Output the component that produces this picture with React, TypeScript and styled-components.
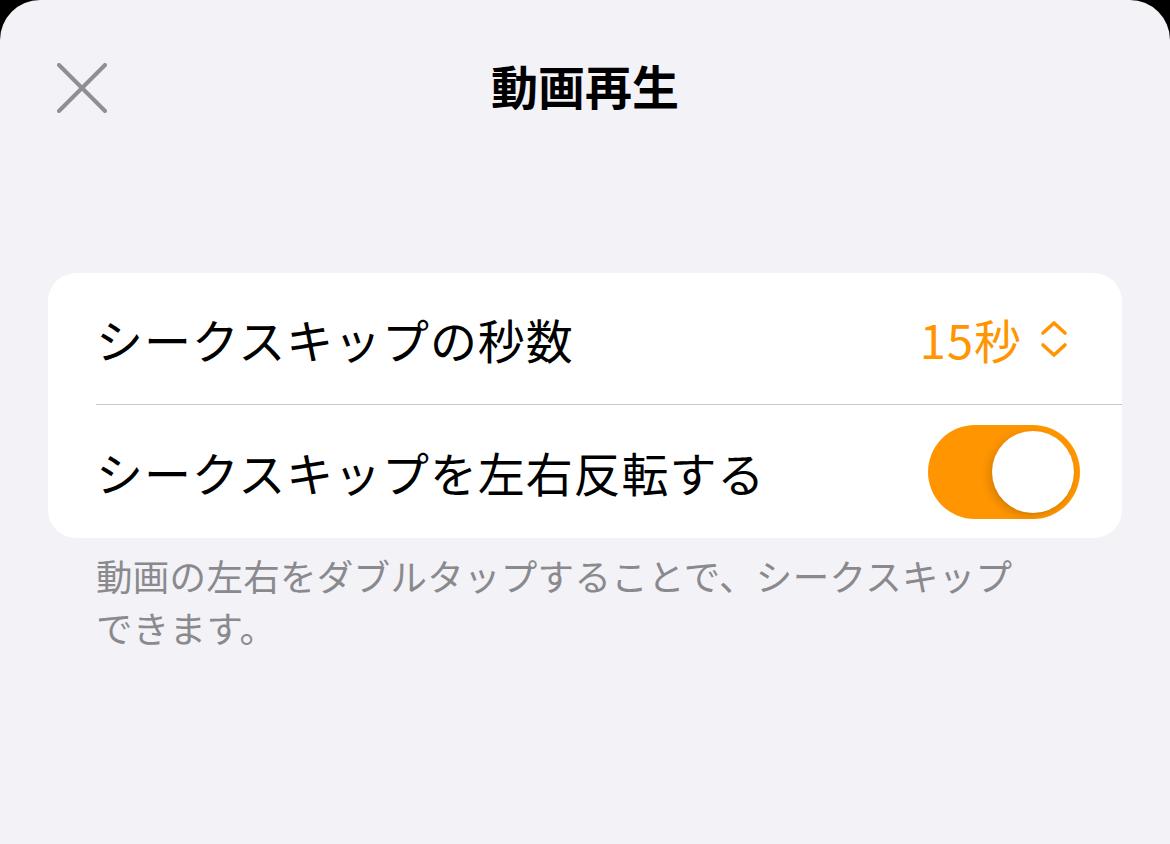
import styled, { createGlobalStyle } from "styled-components";

const GlobalStyle = createGlobalStyle`
    html, body {
        margin: 0;
        padding: 0;
        background: #000;
    }
    body {
        font-family: "Noto Sans CJK JP", "Noto Sans", sans-serif;
        -webkit-font-smoothing: antialiased;
    }
`;

const Sheet = styled.div`
    min-height: 844px;
    background: #f2f2f7;
    border-radius: 40px 40px 0 0;
    overflow: hidden;
`;

const NavBar = styled.header`
    display: grid;
    grid-template-columns: 1fr auto 1fr;
    align-items: center;
    height: 60px;
    padding: 50px 57px 0;
`;

const CloseButton = styled.button`
    justify-self: start;
    width: 50px;
    height: 50px;
    padding: 0;
    border: none;
    background: none;
    display: flex;
    align-items: center;
    justify-content: center;
`;

const Title = styled.h1`
    margin: 0 0 6px;
    font-size: 47px;
    font-weight: 700;
    color: #000;
    letter-spacing: 0;
`;

const Group = styled.section`
    margin: 163px 48px 0;
    background: #fff;
    border-radius: 28px;
    overflow: hidden;
`;

const Row = styled.div<{ $divider?: boolean }>`
    display: flex;
    align-items: center;
    justify-content: space-between;
    height: ${p => (p.$divider ? "131px" : "133px")};
    margin-left: 48px;
    padding-right: 42px;
    border-bottom: ${p => (p.$divider ? "1px solid #c8c8cc" : "none")};
`;

const Label = styled.span`
    font-size: 47px;
    letter-spacing: 0.9px;
    color: #000;
`;

const Picker = styled.div`
    display: flex;
    align-items: center;
    gap: 18px;
    margin-right: 12px;
    color: #ff9500;
    font-size: 47px;
    letter-spacing: 1px;
`;

const Toggle = styled.div<{ $on: boolean }>`
    position: relative;
    width: 152px;
    height: 94px;
    border-radius: 47px;
    background: ${p => (p.$on ? "#ff9500" : "#e9e9ea")};
`;

const Knob = styled.span<{ $on: boolean }>`
    position: absolute;
    top: 6px;
    left: ${p => (p.$on ? "64px" : "6px")};
    width: 82px;
    height: 82px;
    border-radius: 50%;
    background: #fff;
    box-shadow: -3px 3px 10px rgba(0, 0, 0, 0.15), 0 1px 2px rgba(0, 0, 0, 0.06);
`;

const Footnote = styled.p`
    margin: 12px 0 0;
    padding: 0 96px;
    max-width: 940px;
    font-size: 36.5px;
    line-height: 52px;
    letter-spacing: 0.3px;
    color: #8a8a8e;
`;

const CloseIcon = () => (
    <svg width="50" height="50" viewBox="0 0 50 50" fill="none">
        <path d="M2 2 L48 48 M48 2 L2 48" stroke="#8e8e93" strokeWidth="4" strokeLinecap="round" />
    </svg>
);

const UpDownChevron = () => (
    <svg width="28" height="38" viewBox="0 0 28 38" fill="none">
        <path
            d="M3 13 L14 3 L25 13 M3 25 L14 35 L25 25"
            stroke="#ff9500"
            strokeWidth="3.6"
            strokeLinecap="round"
            strokeLinejoin="round"
        />
    </svg>
);

const App = () => {
    return (
        <>
            <GlobalStyle />
            <Sheet>
                <NavBar>
                    <CloseButton aria-label="閉じる">
                        <CloseIcon />
                    </CloseButton>
                    <Title>動画再生</Title>
                    <span />
                </NavBar>
                <Group>
                    <Row $divider>
                        <Label>シークスキップの秒数</Label>
                        <Picker>
                            15秒
                            <UpDownChevron />
                        </Picker>
                    </Row>
                    <Row>
                        <Label>シークスキップを左右反転する</Label>
                        <Toggle $on>
                            <Knob $on />
                        </Toggle>
                    </Row>
                </Group>
                <Footnote>動画の左右をダブルタップすることで、シークスキップできます。</Footnote>
            </Sheet>
        </>
    );
};

export default App;
